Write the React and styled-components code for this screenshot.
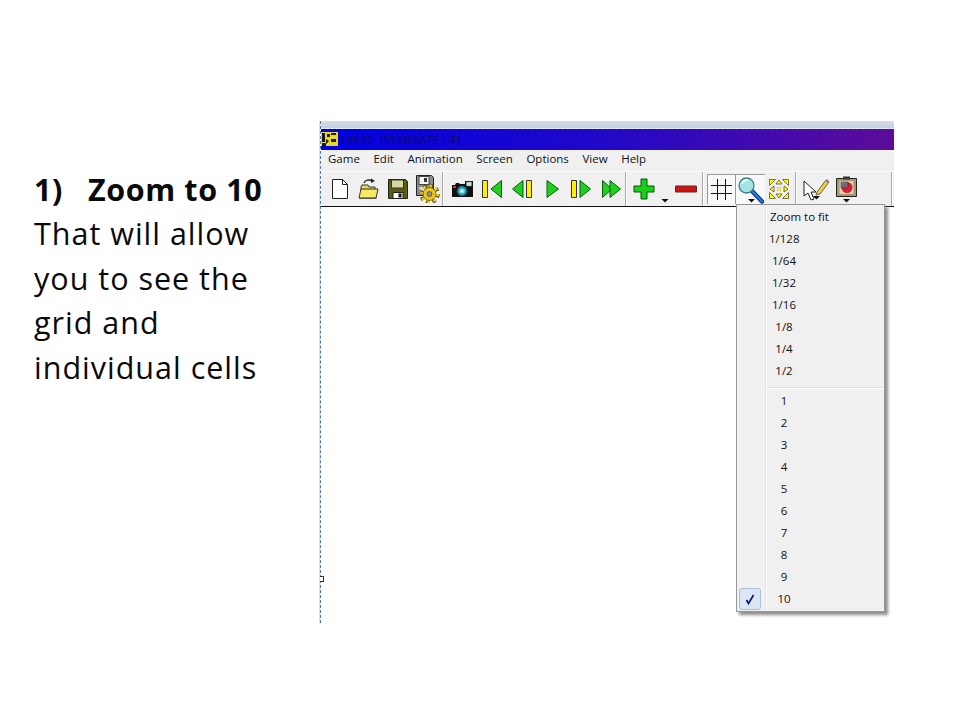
import React from 'react';
import styled, { createGlobalStyle } from 'styled-components';

const GlobalStyle = createGlobalStyle`
  html, body { margin: 0; padding: 0; background: #fff; }
`;

const Slide = styled.div`
  width: 960px;
  height: 720px;
  display: flex;
  overflow: hidden;
  background: #fff;
`;

const Notes = styled.div`
  width: 320px;
  flex: none;
  padding: 166.5px 0 0 34px;
  box-sizing: border-box;
  font-family: "Open Sans", Lato, sans-serif;
  font-size: 30.5px;
  line-height: 44.5px;
  letter-spacing: 1px;
  color: #0a0a0a;
  white-space: nowrap;
`;

const NoteTitle = styled.div`
  display: flex;
  font-weight: 700;
  letter-spacing: 0.6px;
`;

const NoteNumber = styled.span`
  width: 54px;
`;

const Window = styled.div`
  position: relative;
  width: 573px;
  height: 502px;
  margin-top: 121px;
  border-left: 1px dashed #4f74b4;
  box-shadow: -1px 0 0 #cfe0f2;
  font-family: "Open Sans", "Noto Sans", sans-serif;
  display: flex;
  flex-direction: column;
`;

const FrameStrip = styled.div`
  height: 7px;
  background: linear-gradient(#d5dde8, #c3d0e0);
  border-bottom: 1px dashed #e8eefc;
`;

const TitleBar = styled.div`
  height: 21px;
  display: flex;
  align-items: center;
  gap: 3px;
  background: linear-gradient(90deg, #0000e4, #2208c8 50%, #5c0c98);
  font-size: 11.5px;
  color: #0a0a5c;
`;

const MenuBar = styled.div`
  height: 21px;
  display: flex;
  align-items: center;
  gap: 13.6px;
  padding: 0 0 4px 7px;
  box-sizing: border-box;
  background: #f0f0f0;
  font-size: 11.5px;
  color: #111;
`;

const Toolbar = styled.div`
  height: 34px;
  display: flex;
  background: #f0f0f0;
  border-bottom: 1px solid #111;
  border-top: 1px solid #fafafa;
  box-sizing: content-box;
`;

const ToolGroup = styled.div`
  width: ${p => p.$width}px;
  flex: none;
  display: flex;
  align-items: center;
  padding-left: ${p => p.$inset || 0}px;
  box-sizing: border-box;
  border-right: 1px solid #a8a8a8;
  box-shadow: 1px 0 0 #fff;
  margin-right: 2px;
`;

const ToolButton = styled.div`
  width: ${p => p.$width || 30}px;
  height: 30px;
  flex: none;
  display: flex;
  align-items: center;
  justify-content: center;
  box-sizing: border-box;
  background: ${p => (p.$pressed ? '#f9f9f9' : 'transparent')};
  border-top: ${p => (p.$pressed ? '1px solid #9a9a9a' : '0')};
  border-left: ${p => (p.$pressed ? '1px solid #9a9a9a' : '0')};
`;

const Canvas = styled.div`
  flex: 1;
  background: #fff;
`;

const Handle = styled.span`
  position: absolute;
  left: -1px;
  top: ${p => p.$top}px;
  width: 3px;
  height: 4px;
  background: #fff;
  border: 1px solid #333;
  border-left: 0;
`;

const Menu = styled.div`
  position: absolute;
  left: 415px;
  top: 83px;
  width: 149px;
  padding: 1px 0;
  box-sizing: border-box;
  background: linear-gradient(90deg, #f1f1f1 28px, #e2e3e3 28px, #e2e3e3 29px, #fff 29px, #fff 30px, #f0f0f0 30px);
  border: 1px solid #979797;
  box-shadow: 3px 3px 3px #8c8c8c;
  font-family: "Open Sans", "Noto Sans", sans-serif;
  font-size: 11.5px;
  color: #111;
`;

const MenuRow = styled.div`
  position: relative;
  height: 22px;
  display: flex;
  align-items: center;
  padding: 0 0 2px 32px;
  box-sizing: border-box;
`;

const MenuLabel = styled.span`
  width: 30px;
  white-space: nowrap;
  text-align: ${p => (p.$left ? 'left' : 'center')};
  padding-left: ${p => (p.$left ? '1px' : '0')};
`;

const MenuDivider = styled.div`
  height: 8px;
  margin-left: 30px;
  box-sizing: border-box;
  padding-top: 5px;
  &::after {
    content: '';
    display: block;
    height: 1px;
    background: #e0e0e0;
    box-shadow: 0 1px 0 #fff;
  }
`;

const CheckMark = styled.span`
  position: absolute;
  left: 2px;
  top: 0;
  width: 22px;
  height: 22px;
  box-sizing: border-box;
  display: flex;
  align-items: center;
  justify-content: center;
  background: #dbe6f5;
  border: 1px solid #a9c0dd;
  border-radius: 3px;
`;

const Caret = ({ x, y }) => <path d={`M${x} ${y}h7l-3.5 3.5z`} fill="#111" />;

const NewIcon = () => (
  <svg width="18" height="22" viewBox="0 0 18 22">
    <path d="M1.5 1.5h10l5 5v14h-15z" fill="#fff" stroke="#222" />
    <path d="M11.5 1.5v5h5" fill="none" stroke="#222" />
  </svg>
);

const OpenIcon = () => (
  <svg width="22" height="22" viewBox="0 0 22 22">
    <path d="M6 5c1-3 5-4 9-2" fill="none" stroke="#222" strokeWidth="1.4" />
    <path d="M13 .5l4 2.5-4 2z" fill="#222" />
    <path d="M3 9l1-2h6l1 2h6v3H3z" fill="#e8d860" stroke="#333" />
    <path d="M1 20l2-9h17l-2 9z" fill="#f6e860" stroke="#333" />
    <path d="M1.5 20.5h17" stroke="#555" />
  </svg>
);

const SaveIcon = () => (
  <svg width="20" height="20" viewBox="0 0 20 20">
    <path d="M.5.5h17l2 2v17H.5z" fill="#5c5c10" stroke="#222" />
    <path d="M3.5 1h12v8h-12z" fill="#d8d8a0" stroke="#333" />
    <path d="M5 13.5h10v6H5z" fill="#fff" stroke="#222" />
    <path d="M10.5 14.5h3v4h-3z" fill="#111" />
  </svg>
);

const GearDiskIcon = () => (
  <svg width="25" height="28" viewBox="0 0 25 28">
    <path d="M1.5.5h15l2 2v18h-17z" fill="#8c8c94" stroke="#222" />
    <path d="M4 1.500h10v8H4z" fill="#f4f4f4" stroke="#444" />
    <path d="M9 3h3v4H9z" fill="#333" />
    <path d="M4.500 12h9v6h-9z" fill="#d8d8d8" />
    <circle cx="14.500" cy="19" r="7.500" fill="none" stroke="#5a4a00" strokeWidth="5.500" strokeDasharray="3 2.900" />
    <circle cx="14.500" cy="19" r="7.500" fill="none" stroke="#f0d020" strokeWidth="4" strokeDasharray="2 3.900" />
    <circle cx="14.500" cy="19" r="6.500" fill="#e8c820" stroke="#5a4a00" strokeWidth=".7" />
    <circle cx="14.500" cy="19" r="2.500" fill="#8c8c94" stroke="#5a4a00" strokeWidth=".7" />
  </svg>
);

const CameraIcon = () => (
  <svg width="23" height="20" viewBox="0 0 23 20">
    <path d="M1 6h3l1-2h3l1 1h5V2h8v16H1z" fill="#111" />
    <path d="M15.500 3h5v4h-5z" fill="#bfe8ee" stroke="#888" strokeWidth=".5" />
    <circle cx="11" cy="12" r="5" fill="#1c8ca8" />
    <circle cx="11" cy="12" r="2.800" fill="#7ad8e8" />
    <circle cx="11" cy="12" r="1" fill="#fff" />
    <path d="M2 7h3v2H2z" fill="#d83020" />
  </svg>
);

const YELLOW = '#fff000';
const GREEN = '#20d020';

const Bar = ({ x }) => <path d={`M${x} 1.500h5v17h-5z`} fill={YELLOW} stroke="#333" />;
const Tri = ({ d }) => <path d={d} fill={GREEN} stroke="#0a5a0a" />;

const FirstIcon = () => (
  <svg width="20" height="20" viewBox="0 0 20 20">
    <Bar x={.5} />
    <Tri d="M19.500 1.500v17L9 10z" />
  </svg>
);

const PrevIcon = () => (
  <svg width="20" height="20" viewBox="0 0 20 20">
    <Tri d="M11 1.500v17L.5 10z" />
    <Bar x={14.500} />
  </svg>
);

const PlayIcon = () => (
  <svg width="13" height="20" viewBox="0 0 13 20">
    <Tri d="M1 1.500v17L12.500 10z" />
  </svg>
);

const NextIcon = () => (
  <svg width="20" height="20" viewBox="0 0 20 20">
    <Bar x={.5} />
    <Tri d="M9 1.500v17L19.500 10z" />
  </svg>
);

const LastIcon = () => (
  <svg width="19" height="20" viewBox="0 0 19 20">
    <Tri d="M.5 1.500v17L10 10z" />
    <Tri d="M8 1.500v17L18.500 10z" />
  </svg>
);

const PlusIcon = () => (
  <svg width="22" height="22" viewBox="0 0 22 22">
    <path d="M8 1h6v7h7v6h-7v7H8v-7H1V8h7z" fill="#16d016" stroke="#0a500a" />
  </svg>
);

const PlusCaret = () => (
  <svg width="10" height="30" viewBox="0 0 10 30">
    <Caret x={1.500} y={25} />
  </svg>
);

const MinusIcon = () => (
  <svg width="22" height="8" viewBox="0 0 22 8">
    <path d="M.5 1h21v6H.5z" fill="#d81010" stroke="#4a3030" />
  </svg>
);

const GridIcon = () => (
  <svg width="21" height="21" viewBox="0 0 21 21">
    <path d="M6.500 0v21M14.500 0v21M0 6.500h21M0 14.500h21" stroke="#111" fill="none" />
  </svg>
);

const MagnifierIcon = () => (
  <svg width="27" height="28" viewBox="0 0 27 28">
    <path d="M15 15l10 10.500" stroke="#123a88" strokeWidth="4.500" strokeLinecap="round" />
    <path d="M15 15l10 10.500" stroke="#2a78d8" strokeWidth="2" strokeLinecap="round" />
    <circle cx="9.500" cy="9.500" r="7.500" fill="#a4e4e4" stroke="#3a8090" strokeWidth="1.300" />
    <path d="M5 8c1-3 3-4 6-4" stroke="#eaffff" strokeWidth="2" fill="none" />
    <Caret x={11} y={23} />
  </svg>
);

const FitIcon = () => (
  <svg width="20" height="20" viewBox="0 0 20 20">
    <g fill="#ffff00" stroke="#222" strokeWidth=".6">
      <path d="M10 1l3 4H7zM10 19l3-4H7zM1 10l4-3v6zM19 10l-4-3v6z" />
      <path d="M.5.5h6l-6 6zM19.500.5h-6l6 6zM.5 19.500h6l-6-6zM19.500 19.500h-6l6-6z" />
    </g>
    <path d="M8 8h1.500v1.500H8zM10.500 8H12v1.500h-1.500zM8 10.500h1.500V12H8zM10.500 10.500H12V12h-1.500z" fill="#d8c800" />
  </svg>
);

const CursorIcon = () => (
  <svg width="27" height="25" viewBox="0 0 27 25">
    <path d="M1 4l0 15 4-3 3 7 3-1-3-7h5z" fill="#fff" stroke="#222" />
    <path d="M14 15L23 3l3 2-9 12-4 1z" fill="#f0d040" stroke="#444" strokeWidth=".8" />
    <path d="M22 4l3 2 1-2-2-2z" fill="#888" />
    <Caret x={10} y={19} />
  </svg>
);

const ClipIcon = () => (
  <svg width="21" height="28" viewBox="0 0 21 28">
    <path d="M.5 3.500h20v18H.5z" fill="#a89868" stroke="#222" />
    <path d="M3.500 6h14v13h-14z" fill="#d8d0c0" />
    <path d="M7 1.500h7v3H7z" fill="#333" />
    <circle cx="11" cy="12.500" r="5.500" fill="#d82030" />
    <path d="M5 7h7v6H5z" fill="#687088" opacity=".85" stroke="#222" strokeWidth=".5" />
    <Caret x={7} y={24} />
  </svg>
);

const AppLogo = () => (
  <svg width="17" height="15" viewBox="0 0 17 15">
    <path d="M0 0h17v14H0z" fill="#e8d820" />
    <path d="M1 1h3v9H1zM6 2h3v3H6zM10 1h5v2h-5zM5 7l3 2-3 3zM10 7h5v3h-5zM1 11h4v3H1z" fill="#1a1a10" />
  </svg>
);

const TickIcon = () => (
  <svg width="10" height="11" viewBox="0 0 10 11">
    <path d="M1.500 6l2 3.500L8.500 1" fill="none" stroke="#0a1a8c" strokeWidth="1.700" />
  </svg>
);

const MENU_ITEMS = ['Game', 'Edit', 'Animation', 'Screen', 'Options', 'View', 'Help'];
const FRACTIONS = ['1/128', '1/64', '1/32', '1/16', '1/8', '1/4', '1/2'];
const ZOOMS = ['1', '2', '3', '4', '5', '6', '7', '8', '9'];

export default function App() {
  return (
    <Slide>
      <GlobalStyle />
      <Notes>
        <NoteTitle>
          <NoteNumber>1)</NoteNumber>
          <span>Zoom to 10</span>
        </NoteTitle>
        <div>That will allow</div>
        <div>you to see the</div>
        <div>grid and</div>
        <div>individual cells</div>
      </Notes>
      <Window>
        <FrameStrip />
        <TitleBar>
          <AppLogo />
          <span>Life32- [STARGATE.LIF]</span>
        </TitleBar>
        <MenuBar>
          {MENU_ITEMS.map(item => <span key={item}>{item}</span>)}
        </MenuBar>
        <Toolbar>
          <ToolGroup $width={122} $inset={4}>
            <ToolButton $width={29}><NewIcon /></ToolButton>
            <ToolButton $width={30}><OpenIcon /></ToolButton>
            <ToolButton $width={28}><SaveIcon /></ToolButton>
            <ToolButton $width={30}><GearDiskIcon /></ToolButton>
          </ToolGroup>
          <ToolGroup $width={181} $inset={2}>
            <ToolButton><CameraIcon /></ToolButton>
            <ToolButton><FirstIcon /></ToolButton>
            <ToolButton><PrevIcon /></ToolButton>
            <ToolButton><PlayIcon /></ToolButton>
            <ToolButton $width={28}><NextIcon /></ToolButton>
            <ToolButton $width={32}><LastIcon /></ToolButton>
          </ToolGroup>
          <ToolGroup $width={75}>
            <ToolButton $width={32}><PlusIcon /></ToolButton>
            <ToolButton $width={10}><PlusCaret /></ToolButton>
            <ToolButton $width={32}><MinusIcon /></ToolButton>
          </ToolGroup>
          <ToolGroup $width={91} $inset={2}>
            <ToolButton $width={28} $pressed><GridIcon /></ToolButton>
            <ToolButton $width={30} $pressed><MagnifierIcon /></ToolButton>
            <ToolButton $width={28}><FitIcon /></ToolButton>
          </ToolGroup>
          <ToolGroup $width={94} $inset={3}>
            <ToolButton><CursorIcon /></ToolButton>
            <ToolButton><ClipIcon /></ToolButton>
          </ToolGroup>
        </Toolbar>
        <Canvas />
        <Handle $top={455} />
        <Menu>
          <MenuRow><MenuLabel $left>Zoom to fit</MenuLabel></MenuRow>
          {FRACTIONS.map(item => (
            <MenuRow key={item}><MenuLabel>{item}</MenuLabel></MenuRow>
          ))}
          <MenuDivider />
          {ZOOMS.map(item => (
            <MenuRow key={item}><MenuLabel>{item}</MenuLabel></MenuRow>
          ))}
          <MenuRow>
            <CheckMark><TickIcon /></CheckMark>
            <MenuLabel>10</MenuLabel>
          </MenuRow>
        </Menu>
      </Window>
    </Slide>
  );
}
